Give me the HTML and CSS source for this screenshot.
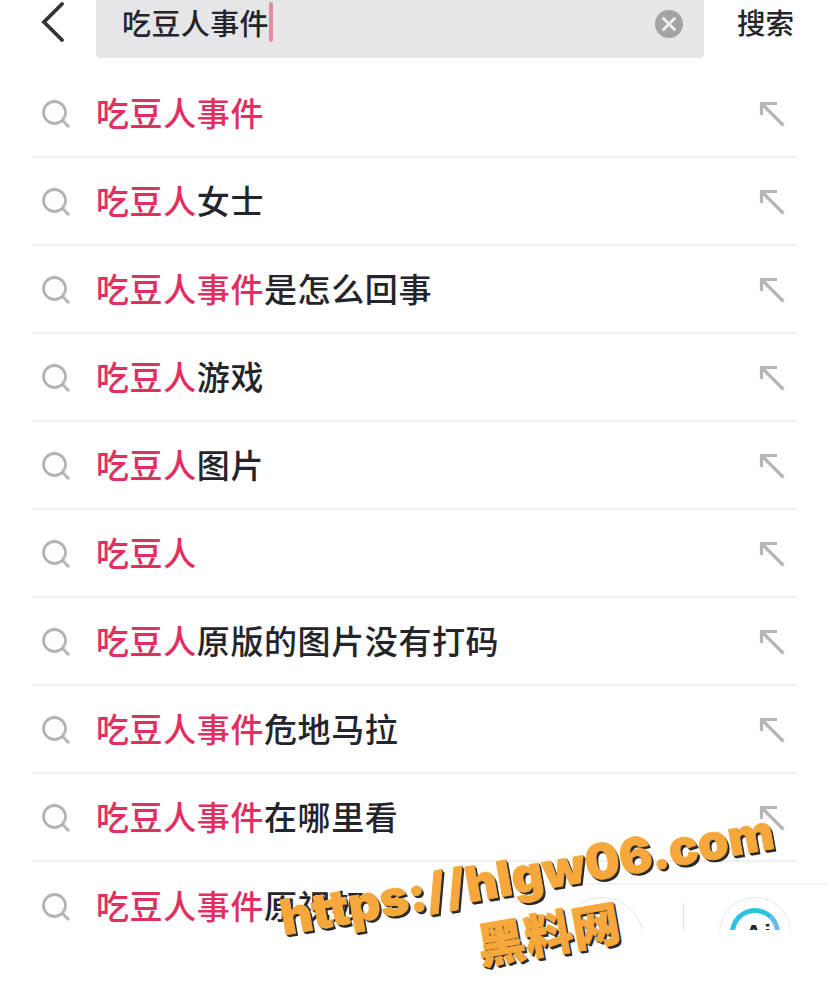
FILE: index.html
```html
<!DOCTYPE html>
<html lang="zh-CN">
<head>
  <meta charset="UTF-8">
  <meta name="viewport" content="width=device-width, initial-scale=1.0">
  <title>吃豆人事件</title>
  <link rel="stylesheet" href="styles.css">
</head>
<body>
  <svg width="0" height="0" class="defs">
    <symbol id="i-search" viewBox="0 0 28 28">
      <circle cx="12.5" cy="12.5" r="11" fill="none" stroke="#b3b3b3" stroke-width="2.8"/>
      <path d="M20.5 20.5 L27 27" fill="none" stroke="#b3b3b3" stroke-width="3"/>
    </symbol>
    <symbol id="i-fill" viewBox="0 0 26 26">
      <path d="M2.5 14 V2.5 H18 M2.5 2.5 L24.5 24.5" fill="none" stroke="#b5b5b5" stroke-width="3.2"/>
    </symbol>
  </svg>

  <header class="topbar">
    <svg class="back" width="24" height="40" viewBox="0 0 24 40">
      <path d="M21 2 L3 20 L21 38" fill="none" stroke="#33343a" stroke-width="3.8" stroke-linecap="round"/>
    </svg>
    <div class="search-box">
      <span class="query">吃豆人事件</span><span class="caret"></span>
      <svg class="clear" width="28" height="28" viewBox="0 0 28 28">
        <circle cx="14" cy="14" r="14" fill="#a3a3a5"/>
        <path d="M8.5 8.5 L19.5 19.5 M19.5 8.5 L8.5 19.5" stroke="#eee" stroke-width="3" stroke-linecap="round"/>
      </svg>
    </div>
    <span class="search-btn">搜索</span>
  </header>

  <ul class="list">
    <li class="row"><svg class="ico"><use href="#i-search"/></svg><span class="label"><em>吃豆人事件</em></span><svg class="fill"><use href="#i-fill"/></svg></li>
    <li class="row"><svg class="ico"><use href="#i-search"/></svg><span class="label"><em>吃豆人</em>女士</span><svg class="fill"><use href="#i-fill"/></svg></li>
    <li class="row"><svg class="ico"><use href="#i-search"/></svg><span class="label"><em>吃豆人事件</em>是怎么回事</span><svg class="fill"><use href="#i-fill"/></svg></li>
    <li class="row"><svg class="ico"><use href="#i-search"/></svg><span class="label"><em>吃豆人</em>游戏</span><svg class="fill"><use href="#i-fill"/></svg></li>
    <li class="row"><svg class="ico"><use href="#i-search"/></svg><span class="label"><em>吃豆人</em>图片</span><svg class="fill"><use href="#i-fill"/></svg></li>
    <li class="row"><svg class="ico"><use href="#i-search"/></svg><span class="label"><em>吃豆人</em></span><svg class="fill"><use href="#i-fill"/></svg></li>
    <li class="row"><svg class="ico"><use href="#i-search"/></svg><span class="label"><em>吃豆人</em>原版的图片没有打码</span><svg class="fill"><use href="#i-fill"/></svg></li>
    <li class="row"><svg class="ico"><use href="#i-search"/></svg><span class="label"><em>吃豆人事件</em>危地马拉</span><svg class="fill"><use href="#i-fill"/></svg></li>
    <li class="row"><svg class="ico"><use href="#i-search"/></svg><span class="label"><em>吃豆人事件</em>在哪里看</span><svg class="fill"><use href="#i-fill"/></svg></li>
    <li class="row"><svg class="ico"><use href="#i-search"/></svg><span class="label"><em>吃豆人事件</em>原视频</span></li>
  </ul>

  <!-- floating buttons, cut off by the bottom of the page content -->
  <div class="float-bar">
    <div class="round"></div>
    <div class="divider"></div>
    <div class="round ai">
      <div class="ai-ring"></div>
      <span class="ai-text">Ai</span>
    </div>
  </div>

  <div class="mark mark-url">https://hlgw06.com</div>
  <div class="mark mark-name">黑料网</div>
</body>
</html>
```

FILE: styles.css
```css
* {
  box-sizing: border-box;
}
html, body {
  height: 990px;
}
body {
  margin: 0;
  background: #fff;
  font-family: "Noto Sans CJK SC", "Liberation Sans", sans-serif;
  color: #24252c;
  overflow: hidden;
  position: relative;
}
.defs {
  position: absolute;
}
.topbar {
  height: 70px;
  display: flex;
  align-items: flex-start;
}
.back {
  margin: 2px 0 0 41px;
  flex: none;
}
.search-box {
  margin-left: 31px;
  width: 608px;
  height: 58px;
  background: #e6e6e8;
  border-radius: 0 0 4px 4px;
  display: flex;
  align-items: center;
  padding: 0 21px 14px 26px;
}
.query {
  font-size: 29px;
  font-weight: 500;
  line-height: 44px;
  letter-spacing: 0.4px;
  margin-top: -1px;
}
.caret {
  width: 4px;
  height: 40px;
  background: #e08ea3;
  border-radius: 2px;
}
.clear {
  margin-left: auto;
  margin-top: 4px;
}
.search-btn {
  margin-left: 33px;
  font-size: 28.5px;
  font-weight: 500;
  line-height: 44px;
}
.list {
  list-style: none;
  margin: 0 31px 0 32px;
  padding: 0;
}
.row {
  height: 88px;
  display: flex;
  align-items: center;
  border-bottom: 2px solid #f1f1f2;
  padding-bottom: 2px;
}
.row:last-child {
  border-bottom: none;
}
.ico {
  width: 28px;
  height: 28px;
  margin: 3px 0 0 10px;
  flex: none;
}
.label {
  margin-left: 26px;
  font-size: 33px;
  font-weight: 500;
  line-height: 46px;
  letter-spacing: 0.6px;
  white-space: nowrap;
  flex: 1;
}
.label em {
  font-style: normal;
  color: #e0305f;
}
.fill {
  width: 26px;
  height: 26px;
  margin: 4px 12px 0 0;
  flex: none;
}
.float-bar {
  position: absolute;
  left: 560px;
  top: 883px;
  width: 268px;
  height: 47px;
  background: #fff;
  border-top: 2px solid #f3f3f3;
  border-radius: 8px 0 0 0;
  overflow: hidden;
}
.round {
  position: absolute;
  top: 12px;
  left: 0;
  width: 84px;
  height: 84px;
  border: 1px solid #e4e4e4;
  border-radius: 50%;
}
.round.ai {
  left: 159px;
  width: 72px;
  height: 72px;
}
.divider {
  position: absolute;
  left: 123px;
  top: 18px;
  width: 1px;
  height: 28px;
  background: #ddd;
}
.ai-ring {
  position: absolute;
  inset: 10px;
  border: 5px solid #2cc4dc;
  border-right-color: #6cb8ee;
  border-radius: 50%;
}
.ai-text {
  position: absolute;
  top: 22px;
  left: 25px;
  font-family: "Liberation Sans", sans-serif;
  font-weight: 700;
  font-size: 24px;
  letter-spacing: 2px;
  color: #222;
}
.mark {
  position: absolute;
  color: #f6a83c;
  font-weight: 900;
  white-space: nowrap;
  -webkit-text-stroke: 0.8px #f6a83c;
  text-shadow: 2px 3px 0 #2b2b2b, 1px 1px 0 #2b2b2b, 1px 2px 0 #2b2b2b;
}
.mark-url {
  left: 272px;
  top: 845px;
  width: 510px;
  text-align: center;
  font-family: Inter, "Liberation Sans", sans-serif;
  font-size: 49px;
  line-height: 60px;
  transform: rotate(-10deg);
}
.mark-name {
  left: 470px;
  top: 901px;
  width: 156px;
  text-align: center;
  font-size: 48px;
  line-height: 60px;
  transform: rotate(-10deg);
}
```
